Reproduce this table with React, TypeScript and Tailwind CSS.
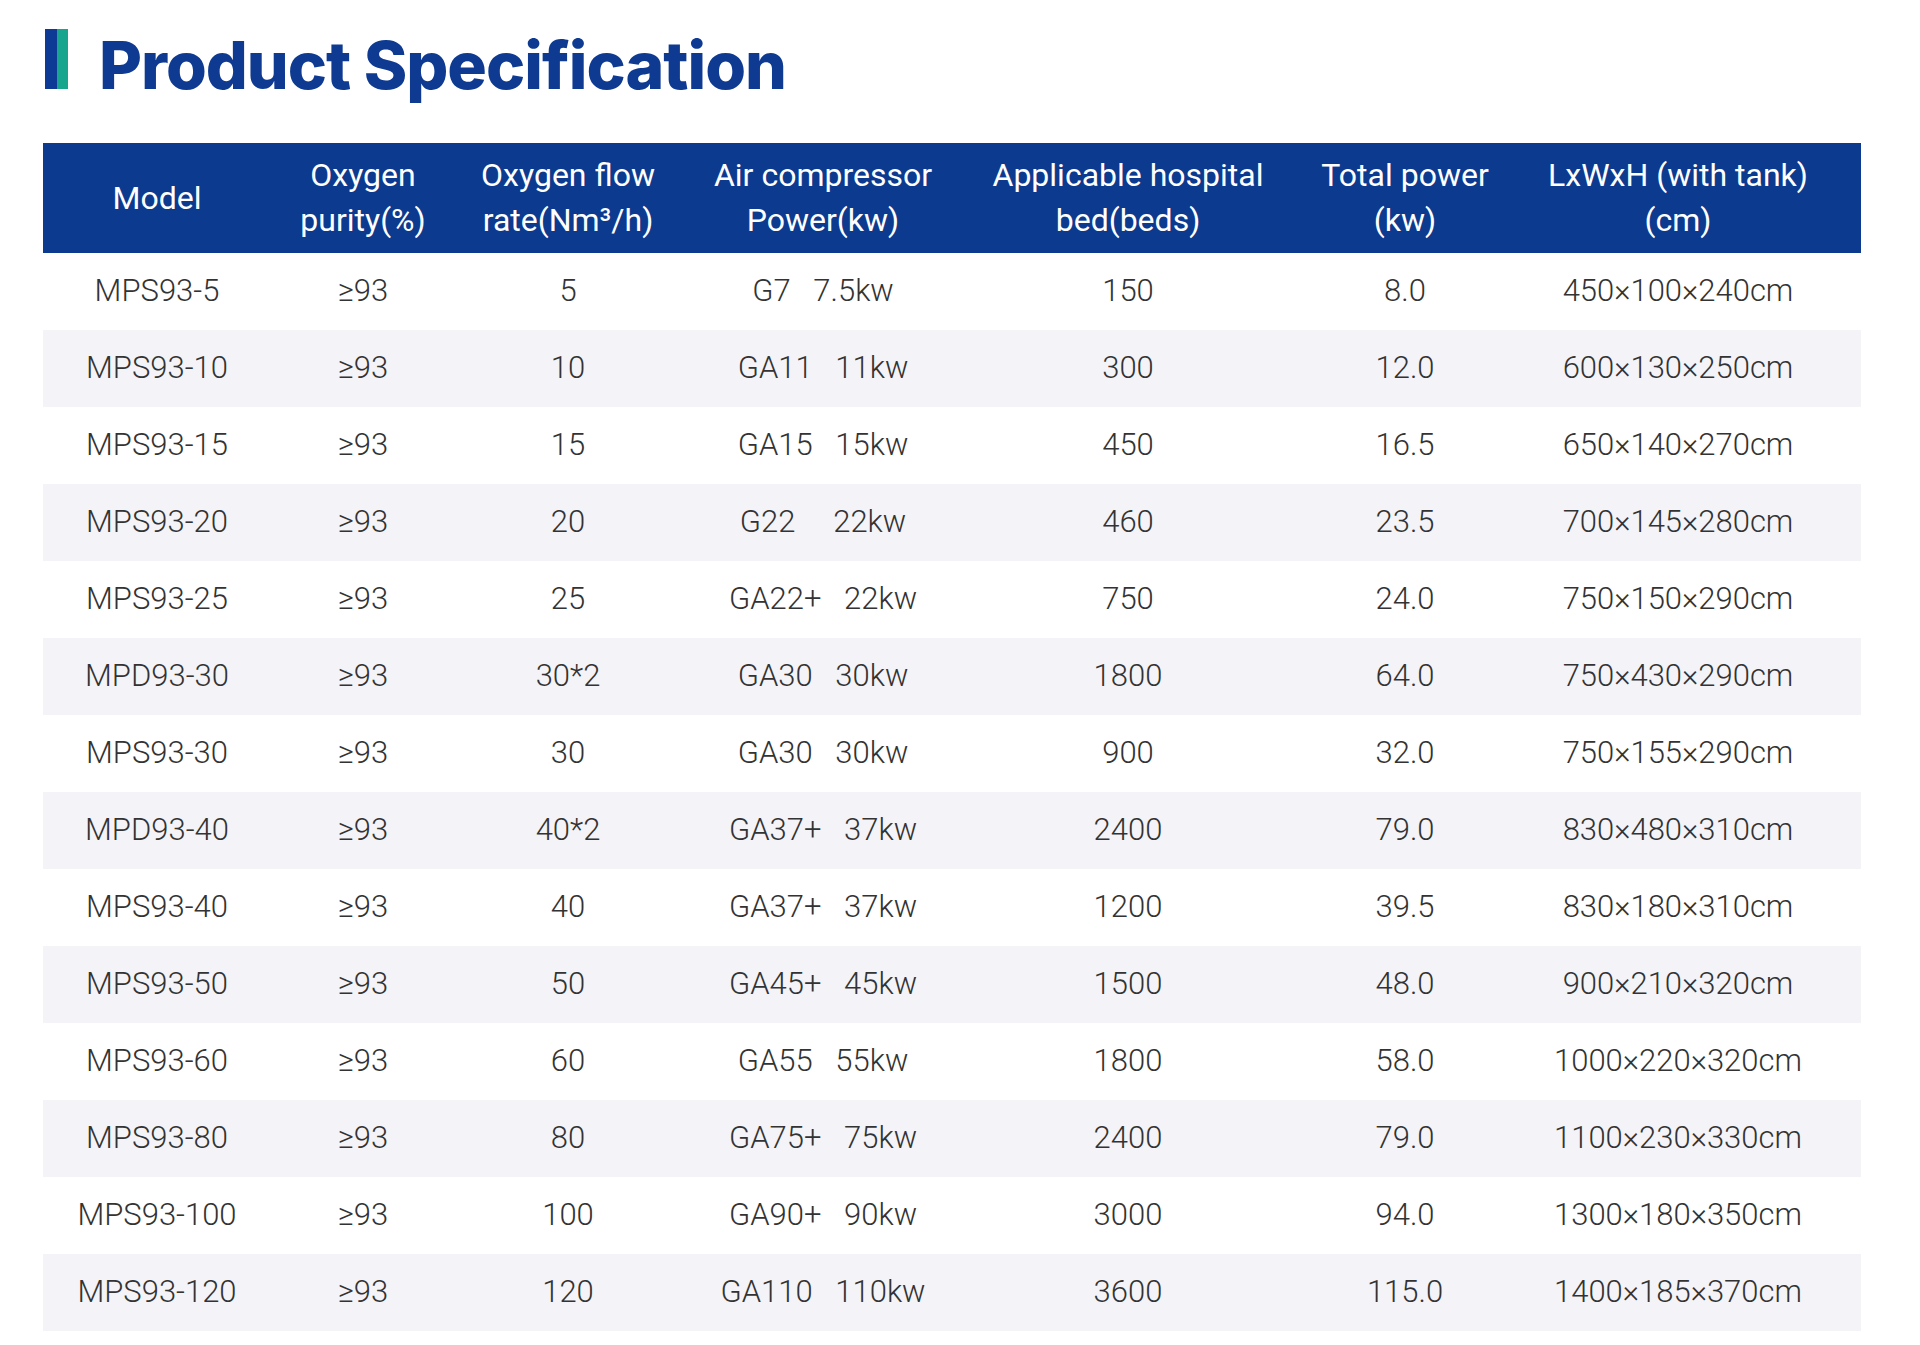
const headers = [
  ["Model"],
  ["Oxygen", "purity(%)"],
  ["Oxygen flow", "rate(Nm³/h)"],
  ["Air compressor", "Power(kw)"],
  ["Applicable hospital", "bed(beds)"],
  ["Total power", "(kw)"],
  ["LxWxH (with tank)", "(cm)"],
];

const rows = [
  ["MPS93-5", "≥93", "5", "G7   7.5kw", "150", "8.0", "450×100×240cm"],
  ["MPS93-10", "≥93", "10", "GA11   11kw", "300", "12.0", "600×130×250cm"],
  ["MPS93-15", "≥93", "15", "GA15   15kw", "450", "16.5", "650×140×270cm"],
  ["MPS93-20", "≥93", "20", "G22     22kw", "460", "23.5", "700×145×280cm"],
  ["MPS93-25", "≥93", "25", "GA22+   22kw", "750", "24.0", "750×150×290cm"],
  ["MPD93-30", "≥93", "30*2", "GA30   30kw", "1800", "64.0", "750×430×290cm"],
  ["MPS93-30", "≥93", "30", "GA30   30kw", "900", "32.0", "750×155×290cm"],
  ["MPD93-40", "≥93", "40*2", "GA37+   37kw", "2400", "79.0", "830×480×310cm"],
  ["MPS93-40", "≥93", "40", "GA37+   37kw", "1200", "39.5", "830×180×310cm"],
  ["MPS93-50", "≥93", "50", "GA45+   45kw", "1500", "48.0", "900×210×320cm"],
  ["MPS93-60", "≥93", "60", "GA55   55kw", "1800", "58.0", "1000×220×320cm"],
  ["MPS93-80", "≥93", "80", "GA75+   75kw", "2400", "79.0", "1100×230×330cm"],
  ["MPS93-100", "≥93", "100", "GA90+   90kw", "3000", "94.0", "1300×180×350cm"],
  ["MPS93-120", "≥93", "120", "GA110   110kw", "3600", "115.0", "1400×185×370cm"],
];

const cols = "grid grid-cols-[228px_184px_226px_284px_326px_228px_342px]";

export default function App() {
  return (
    <div className="min-h-[1345px] w-[1920px] bg-white font-['Roboto',sans-serif]">
      {/* Title */}
      <div className="flex h-[60px] items-start pl-[45px] mt-[29px]">
        <div className="flex h-[60px] w-[23px]">
          <div className="w-[12px] bg-[#0d3a94]" />
          <div className="w-[11px] bg-[#17a68d]" />
        </div>
        <h1 className="ml-[31px] whitespace-nowrap font-['Inter',sans-serif] text-[66px] font-extrabold leading-[72px] tracking-[-1px] text-[#0e3a92]">
          Product Specification
        </h1>
      </div>

      {/* Table */}
      <div className="ml-[43px] mt-[54px] w-[1818px]">
        <div className={`${cols} h-[110px] bg-[#0c3a8f] text-white`}>
          {headers.map((h, i) => (
            <div
              key={i}
              className={`flex flex-col items-center justify-center text-[32px] leading-[45px] ${i === 6 ? "pr-[24px]" : ""}`}
            >
              {h.map((line) => (
                <span key={line}>{line}</span>
              ))}
            </div>
          ))}
        </div>
        {rows.map((r, ri) => (
          <div
            key={ri}
            className={`${cols} h-[77px] text-[31px] font-light text-[#333] ${ri % 2 === 1 ? "bg-[#f4f4f8]" : "bg-white"}`}
          >
            {r.map((c, ci) => (
              <div
                key={ci}
                className={`flex items-center justify-center whitespace-pre ${ci === 6 ? "pr-[24px]" : ""}`}
              >
                {c}
              </div>
            ))}
          </div>
        ))}
      </div>
    </div>
  );
}
